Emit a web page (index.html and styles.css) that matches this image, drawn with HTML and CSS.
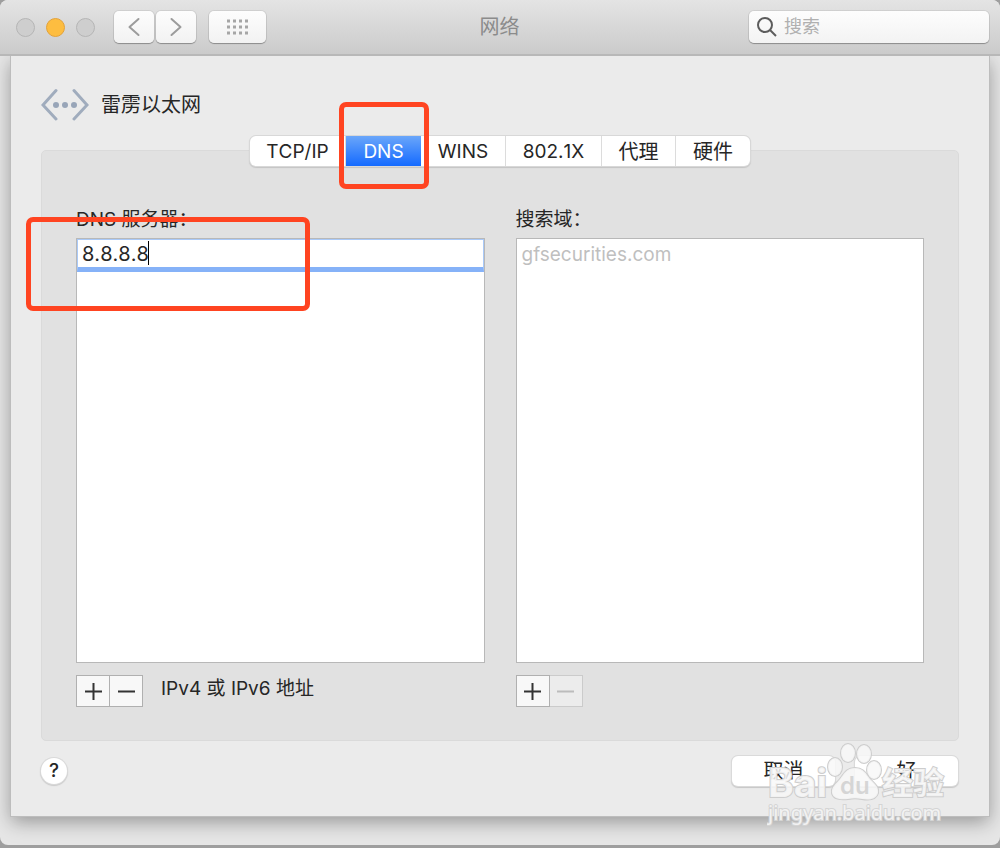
FILE: index.html
```html
<!DOCTYPE html>
<html lang="zh-CN">
<head>
    <meta charset="UTF-8">
    <meta name="viewport" content="width=device-width, initial-scale=1.0">
    <title>网络</title>
    <link rel="stylesheet" href="styles.css">
</head>
<body>
    <div class="window">
        <header class="toolbar">
            <div class="toolbar-left">
                <div class="lights">
                    <button class="light" aria-label="关闭"></button>
                    <button class="light light-minimize" aria-label="最小化"></button>
                    <button class="light" aria-label="缩放"></button>
                </div>
                <div class="nav-buttons">
                    <button class="tool-button" aria-label="后退">
                        <svg width="12" height="20" viewBox="0 0 12 20"><path d="M10.500 2L1.500 10l9 8"/></svg>
                    </button>
                    <button class="tool-button" aria-label="前进">
                        <svg width="12" height="20" viewBox="0 0 12 20"><path d="M1.500 2l9 8-9 8"/></svg>
                    </button>
                </div>
                <button class="tool-button tool-button-wide" aria-label="显示全部">
                    <svg class="dots" width="22" height="16" viewBox="0 0 22 16">
                        <path d="M0 2h22M0 8h22M0 14h22"/>
                    </svg>
                </button>
            </div>
            <h1 class="window-title">网络</h1>
            <label class="search">
                <svg width="20" height="20" viewBox="0 0 20 20"><circle cx="8" cy="8" r="7"/><path d="M13 13l6 6"/></svg>
                <input type="text" placeholder="搜索" aria-label="搜索">
            </label>
        </header>

        <main class="sheet">
            <div class="service">
                <svg class="service-icon" width="48" height="34" viewBox="0 0 48 34">
                    <path d="M15 2.500L2 17l13 14M33 2.500L46 17 33 31"/>
                    <circle cx="15" cy="17" r="3"/><circle cx="24" cy="17" r="3"/><circle cx="33" cy="17" r="3"/>
                </svg>
                <h2>雷雳以太网</h2>
            </div>

            <nav class="tabs">
                <button class="tab tab-wide">TCP/IP</button>
                <button class="tab tab-active">DNS<span class="callout callout-tab"></span></button>
                <button class="tab tab-medium">WINS</button>
                <button class="tab tab-wide">802.1X</button>
                <button class="tab tab-cjk">代理</button>
                <button class="tab tab-cjk">硬件</button>
            </nav>

            <section class="panel">
                <div class="column">
                    <label for="dns">DNS 服务器：</label>
                    <div class="list">
                        <div class="list-edit">
                            <input id="dns" class="list-input" type="text" value="8.8.8.8">
                            <span class="caret"></span>
                        </div>
                        <span class="callout callout-list"></span>
                    </div>
                    <div class="list-footer">
                        <div class="stepper">
                            <button aria-label="添加"><svg width="17" height="17" viewBox="0 0 17 17"><path d="M0 8.500h17M8.500 0v17"/></svg></button>
                            <button aria-label="移除"><svg width="17" height="17" viewBox="0 0 17 17"><path d="M0 8.500h17"/></svg></button>
                        </div>
                        <span class="hint">IPv4 或 IPv6 地址</span>
                    </div>
                </div>
                <div class="column">
                    <label for="domain">搜索域：</label>
                    <div class="list">
                        <input id="domain" class="list-input" type="text" placeholder="gfsecurities.com">
                    </div>
                    <div class="list-footer">
                        <div class="stepper">
                            <button aria-label="添加"><svg width="17" height="17" viewBox="0 0 17 17"><path d="M0 8.500h17M8.500 0v17"/></svg></button>
                            <button aria-label="移除" disabled><svg width="17" height="17" viewBox="0 0 17 17"><path d="M0 8.500h17"/></svg></button>
                        </div>
                    </div>
                </div>
            </section>

            <footer class="actions">
                <button class="help" aria-label="帮助">?</button>
                <div class="action-buttons">
                    <button class="push">取消</button>
                    <button class="push">好</button>
                </div>
            </footer>

            <svg class="watermark" width="184" height="88" viewBox="0 0 184 88">
                <text class="mark-name" x="1" y="57">Bai</text>
                <g class="mark-paw">
                    <ellipse cx="68" cy="27" rx="7" ry="9"/>
                    <ellipse cx="81" cy="13" rx="7" ry="9"/>
                    <ellipse cx="97" cy="14" rx="7" ry="9"/>
                    <ellipse cx="107" cy="30" rx="7" ry="9"/>
                    <path d="M88 28c9 0 11 6 15 11 5 5 9 8 8 14-2 7-10 7-16 6-5-1-9-1-14 0-7 1-15 0-16-6-1-6 4-9 8-14 4-5 6-11 15-11z"/>
                </g>
                <text class="mark-du" x="73" y="54">du</text>
                <text class="mark-cjk" x="115" y="54">经验</text>
                <text class="mark-url" x="1" y="80">jingyan.baidu.com</text>
            </svg>
        </main>
    </div>
</body>
</html>
```
FILE: styles.css
```css
* {
    box-sizing: border-box;
}
body {
    margin: 0;
    min-height: 100vh;
    display: flex;
    padding-bottom: 3px;
    background: #9e9e9e;
    color: #262626;
    font-family: Inter, "Noto Sans CJK SC", sans-serif;
    font-size: 19px;
    line-height: 28px;
}
button,
input {
    font: inherit;
    color: inherit;
    margin: 0;
    padding: 0;
    border: none;
    background: none;
}
h1,
h2 {
    margin: 0;
    font-size: 20px;
    font-weight: 400;
}
.window {
    flex: 1;
    display: flex;
    flex-direction: column;
    background: #e6e6e6;
    border-radius: 8px;
    overflow: hidden;
}

/* Toolbar */
.toolbar {
    position: relative;
    z-index: 1;
    display: grid;
    grid-template-columns: 1fr auto 1fr;
    align-items: center;
    height: 56px;
    padding: 0 11px 0 10px;
    background: linear-gradient(#e4e4e4, #cbcbcb);
    border-bottom: 2px solid #b8b8b8;
}
.toolbar-left {
    display: flex;
    align-items: center;
    gap: 13px;
    padding-left: 6px;
}
.lights {
    display: flex;
    gap: 11px;
    margin-right: 6px;
}
.light {
    width: 19px;
    height: 19px;
    border: 1px solid #b5b5b5;
    border-radius: 50%;
    background: #cecece;
}
.light-minimize {
    border-color: #e3a23a;
    background: #fdbd40;
}
.nav-buttons {
    display: flex;
    gap: 2px;
}
.tool-button {
    display: flex;
    align-items: center;
    justify-content: center;
    width: 40px;
    height: 32px;
    border-radius: 5px;
    background: linear-gradient(#fdfdfd, #f2f2f2);
    box-shadow: 0 0 0 1px rgba(0, 0, 0, 0.07), 0 1px 1px rgba(0, 0, 0, 0.28);
}
.tool-button-wide {
    width: 57px;
}
.tool-button svg {
    fill: none;
    stroke: #9c9c9c;
    stroke-width: 2;
    stroke-linecap: round;
    stroke-linejoin: round;
}
.tool-button .dots {
    stroke: #a6a6a6;
    stroke-width: 3;
    stroke-dasharray: 3 3;
    stroke-linecap: butt;
}
.window-title {
    color: #8b8b8b;
}
.search {
    justify-self: end;
    display: flex;
    align-items: center;
    gap: 7px;
    width: 240px;
    height: 32px;
    padding-left: 8px;
    border-radius: 5px;
    background: linear-gradient(#fdfdfd, #f3f3f3);
    box-shadow: 0 0 0 1px rgba(0, 0, 0, 0.07), 0 1px 1px rgba(0, 0, 0, 0.28);
}
.search svg {
    flex: none;
    fill: none;
    stroke: #5c5c5c;
    stroke-width: 2;
}
.search input {
    flex: 1;
    min-width: 0;
    font-size: 18px;
}
.search input::placeholder {
    color: #b0b0b0;
    opacity: 1;
}

/* Sheet */
.sheet {
    position: relative;
    flex: 1;
    display: flex;
    flex-direction: column;
    margin: 0 11px 29px;
    padding: 32px 30px 30px;
    background: #ebebeb;
    box-shadow: 0 0 0 1px #bdbdbd, 0 6px 18px rgba(0, 0, 0, 0.35);
}
.service {
    display: flex;
    align-items: center;
    gap: 12px;
    height: 34px;
}
.service-icon {
    fill: #98a5b8;
    stroke: none;
}
.service-icon path {
    fill: none;
    stroke: #a0acbd;
    stroke-width: 3;
    stroke-linecap: round;
}

/* Tabs sit over the panel's top edge */
.tabs {
    position: relative;
    z-index: 1;
    align-self: center;
    display: flex;
    margin: 14px 0 -16px;
    border-radius: 6px;
    background: #fff;
    box-shadow: 0 0 0 1px #d8d8d8, 0 1px 1px 1px #c4c4c4;
}
.tab {
    width: 74px;
    height: 30px;
    padding-top: 1px;
    border-right: 1px solid #dcdcdc;
}
.tab:last-child {
    border-right: none;
}
.tab-wide {
    width: 96px;
    font-kerning: none;
}
.tab-medium {
    width: 85px;
}
.tab-cjk {
    font-size: 20px;
}
.tab-active {
    position: relative;
    z-index: 1;
    width: 75px;
    border: none;
    color: #fff;
    background: linear-gradient(#6aa6fa, #146aff);
}

/* Red highlight frames */
.callout {
    position: absolute;
    border: 5px solid #ff4421;
    border-radius: 7px;
    pointer-events: none;
}
.callout-tab {
    inset: -34px -8px -23px -7px;
}
.callout-list {
    top: -22px;
    left: -51px;
    width: 284px;
    height: 94px;
}

.panel {
    flex: 1;
    display: grid;
    grid-template-columns: 1fr 1fr;
    gap: 31px;
    padding: 55px 34px 33px;
    border: 1px solid #dadada;
    border-radius: 5px;
    background: #e1e1e1;
}
.column {
    display: flex;
    flex-direction: column;
}
.list {
    position: relative;
    flex: 1;
    margin-top: 4px;
    border: 1px solid #b8b8b8;
    background: #fff;
}
.list-edit {
    position: relative;
    height: 33px;
    border: 1px solid #a9c9f8;
    border-bottom: 5px solid #86b2f8;
}
.list-input {
    display: block;
    width: 100%;
    height: 30px;
    padding: 0 5px;
    outline: none;
}
.list-edit .list-input {
    height: 28px;
    padding: 0 4px;
    font-size: 20px;
    font-kerning: none;
    font-feature-settings: "calt" 0;
}
.list-input::placeholder {
    color: #bfbfbf;
    opacity: 1;
}
.caret {
    position: absolute;
    top: 1px;
    left: 70px;
    width: 1px;
    height: 24px;
    background: #000;
}
.list-footer {
    display: flex;
    gap: 18px;
    height: 32px;
    margin-top: 12px;
}
.stepper {
    display: flex;
}
.stepper button {
    display: flex;
    align-items: center;
    justify-content: center;
    width: 34px;
    height: 32px;
    border: 1px solid #b0b0b0;
    background: #f8f8f8;
}
.stepper button + button {
    margin-left: -1px;
}
.stepper button:first-child {
    position: relative;
}
.stepper svg {
    stroke: #333;
    stroke-width: 2;
}
.stepper button:disabled {
    border-color: #cbcbcb;
    background: #ececec;
}
.stepper button:disabled svg {
    stroke: #bcbcbc;
}

/* Bottom row */
.actions {
    display: flex;
    align-items: center;
    justify-content: space-between;
    margin-top: 15px;
    padding-right: 1px;
}
.help {
    width: 26px;
    height: 26px;
    border-radius: 50%;
    background: #fff;
    box-shadow: 0 0 0 1px #dadada, 0 1px 1px 1px #cbcbcb;
    font-weight: 500;
    line-height: 26px;
}
.action-buttons {
    display: flex;
    gap: 20px;
}
.push {
    width: 103px;
    height: 30px;
    border-radius: 6px;
    background: #fff;
    box-shadow: 0 0 0 1px #dadada, 0 1px 1px 1px #c6c6c6;
    font-size: 20px;
}

.watermark {
    position: absolute;
    right: 38px;
    bottom: -12px;
    fill: #f8f8f8;
    fill-opacity: 0.85;
    stroke: #cdcdcd;
    stroke-width: 2;
    paint-order: stroke;
    pointer-events: none;
}
.mark-name {
    font-size: 39px;
    font-weight: 700;
}
.mark-du {
    fill: #d0d0d0;
    stroke: none;
    font-size: 24px;
    font-weight: 600;
}
.mark-cjk {
    font-size: 31px;
    font-weight: 700;
}
.mark-url {
    font-family: "Noto Sans", sans-serif;
    font-size: 20px;
    stroke: #d4d4d4;
}
```
